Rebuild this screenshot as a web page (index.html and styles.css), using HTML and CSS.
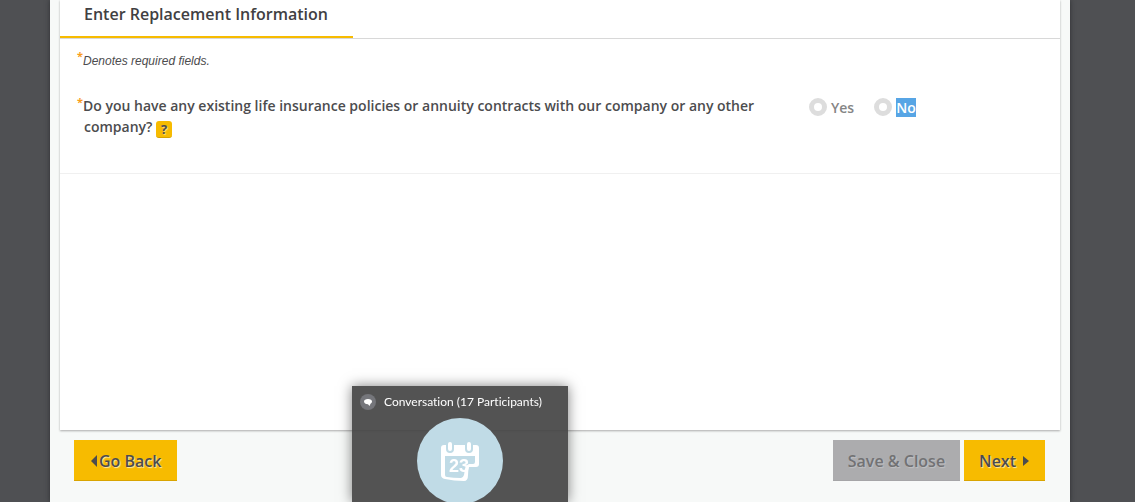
FILE: index.html
```
<!DOCTYPE html>
<html lang="en">
<head>
<meta charset="utf-8">
<title>Enter Replacement Information</title>
<link rel="stylesheet" href="styles.css">
</head>
<body>
<div class="shell">
  <main class="card">
    <header class="tabs"><h1 class="tab">Enter Replacement Information</h1></header>
    <form class="form" id="replacement">
      <p class="note"><span class="star">*</span>Denotes required fields.</p>
      <div class="question" role="radiogroup" aria-labelledby="q1">
        <div class="question-text">
          <span class="star">*</span><span id="q1">Do you have any existing life insurance policies or annuity contracts with our company or any other company?</span>
          <button class="help" type="button">?</button>
        </div>
        <div class="answers">
          <label class="answer"><input type="radio" name="existing" value="yes"><span>Yes</span></label>
          <label class="answer"><input type="radio" name="existing" value="no"><span class="selected">No</span></label>
        </div>
      </div>
    </form>
  </main>
  <footer class="actions">
    <button class="btn btn-back" type="button"><svg class="arrow" width="6" height="12" viewBox="0 0 6 12"><path d="M6 0v12L0 6z"/></svg>Go Back</button>
    <div class="actions-end">
      <button class="btn btn-muted" type="button" disabled>Save &amp; Close</button>
      <button class="btn btn-next" type="submit" form="replacement">Next<svg class="arrow arrow-next" width="6" height="12" viewBox="0 0 6 12"><path d="M0 1v10l6-5z"/></svg></button>
    </div>
  </footer>
</div>
<aside class="toast">
  <div class="toast-head">
    <svg width="16" height="16" viewBox="0 0 16 16"><circle cx="8" cy="8" r="8" fill="#75767b"/><path d="M8 5c2.600 0 4 1 4 2.600 0 1.100-.6 1.800-1.500 2.200L9.500 12 8 10.200C5.500 10.200 4 9.200 4 7.600S5.500 5 8 5z" fill="#fff"/></svg>
    <span>Conversation (17 Participants)</span>
  </div>
  <svg class="avatar" width="86" height="86" viewBox="0 0 86 86">
    <circle cx="43" cy="43" r="43" fill="#c0dbe6"/>
    <path d="M27 27h32q3 0 3 3v16q0 3-3 3h-7q-1 4-1 8 0 6-4 6-10 0-19-2-4-1-4-4V30q0-3 3-3z" fill="#fff"/>
    <path d="M28 38h30v6q0 2-2 2h-4q-3 1-4 5l-1 6q-1 3-3 3-8 0-14-1-2 0-2-2z" fill="#c0dbe6"/>
    <path d="M33 26v5M52 26v5" stroke="#c0dbe6" stroke-width="8" stroke-linecap="round"/>
    <path d="M33 26v5M52 26v5" stroke="#fff" stroke-width="4" stroke-linecap="round"/>
    <text class="avatar-day" x="32" y="54">23</text>
  </svg>
</aside>
</body>
</html>
```
FILE: styles.css
```
* { box-sizing: border-box; }

body {
  margin: 0;
  padding: 0 65px 0 50px;
  background: #4f5053;
  color: #4c4c4e;
  font-family: "Open Sans", sans-serif;
  font-weight: 600;
}

.shell {
  display: flex;
  flex-direction: column;
  min-height: 100vh;
  padding: 0 10px;
  background: #f7f9f8;
  box-shadow: 0 0 5px #2d2e31;
}

.card {
  flex: 1;
  background: #fff;
  box-shadow: 0 1px 2px #aaa;
}

.tabs {
  display: flex;
  border-bottom: 1px solid #d8d8d8;
}

.tab {
  margin: 0;
  padding: 3px 25px 11px 24px;
  border-bottom: 2px solid #f7bb00;
  color: #414042;
  font-size: 16px;
  font-weight: 600;
  line-height: 22px;
}

.form {
  padding: 11px 16px 0 24px;
  border-bottom: 1px solid #f0f0f0;
}

.star {
  margin-left: -7px;
  color: #f99d1c;
  font-family: "Open Sans", sans-serif;
  font-size: 11px;
  font-style: normal;
  font-weight: 700;
  line-height: 1;
  vertical-align: 5px;
}

.note {
  margin: 0;
  font-family: "Liberation Sans", Arial, sans-serif;
  font-size: 12px;
  font-style: italic;
  font-weight: 400;
  line-height: 18px;
}

.question {
  display: flex;
  justify-content: space-between;
  padding: 25px 0 35px;
}

.question-text {
  width: 70%;
  max-width: 684px;
  font-size: 14px;
  line-height: 21px;
}

.help {
  height: 17px;
  width: 16px;
  padding: 0;
  border: 0;
  border-bottom: 1px solid #d6a200;
  border-radius: 3px;
  background: #f7bb00;
  color: #4c4c4e;
  font: 700 13px/16px "Open Sans", sans-serif;
  text-shadow: 1px 1px 1px #ffe08a;
  vertical-align: -2px;
}

.answers {
  display: flex;
  align-items: flex-start;
  gap: 20px;
  width: 235px;
  padding-top: 3px;
  color: #858585;
  font-size: 14px;
  line-height: 19px;
}

.answer {
  display: flex;
  gap: 4px;
}

.answer input {
  appearance: none;
  width: 18px;
  height: 18px;
  margin: 0;
  border: 5px solid #ddd;
  border-radius: 50%;
  background: #fff;
}

.selected {
  background: #57a5e5;
  color: #fff;
}

.actions {
  display: flex;
  justify-content: space-between;
  padding: 10px 15px 21px 14px;
}

.actions-end {
  display: flex;
  gap: 4px;
}

.btn {
  display: flex;
  align-items: center;
  height: 41px;
  padding: 1px 15px 0;
  border: 0;
  border-bottom: 1px solid #d9a400;
  background: #f7bb00;
  color: #4c4c4e;
  font: 600 16px/22px "Open Sans", sans-serif;
  text-shadow: 1px 1px 1px #ffe9a8;
}

.btn-back {
  gap: 2px;
  padding: 1px 16px 0 17px;
}

.btn-next { padding-right: 16px; }

.btn-muted {
  border-color: #a5a5a7;
  background: #acacae;
  color: #727274;
  text-shadow: 1px 1px 1px #c2c2c4;
}

.arrow { fill: #4c4c4e; }
.arrow-next { margin-left: 7px; }

.toast {
  position: fixed;
  bottom: 0;
  left: 352px;
  width: 216px;
  height: 116px;
  overflow: hidden;
  background: rgba(68, 68, 68, 0.92);
  box-shadow: 0 0 12px rgba(0, 0, 0, 0.5);
  color: #fff;
  font: 400 12px/16px Lato, sans-serif;
  font-variant-ligatures: none;
}

.toast-head {
  display: flex;
  gap: 8px;
  padding: 8px;
}

.avatar {
  display: block;
  margin: 0 auto;
}

.avatar-day {
  fill: #fff;
  font: 700 18px "Liberation Sans", sans-serif;
}
```
